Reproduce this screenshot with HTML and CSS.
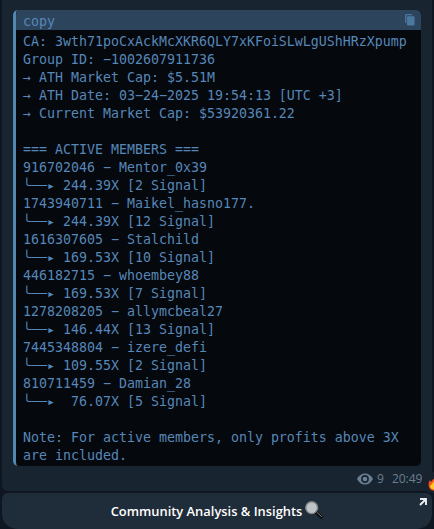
FILE: index.html
```html
<!DOCTYPE html>
<html lang="en">
<head>
    <meta charset="utf-8">
    <title>Community Analysis</title>
    <link rel="stylesheet" href="styles.css">
</head>
<body>
    <div class="message">
        <div class="code-block">
            <div class="code-header">
                <span>copy</span>
                <svg class="copy-icon" width="10" height="12" viewBox="0 0 10 12">
                    <path d="M0.7 9V2Q0.7 0.7 2 0.7H7" fill="none" stroke="#4a789f" stroke-width="1.3"/>
                    <rect x="2" y="2.3" width="7.5" height="9.2" rx="1" fill="#4a789f"/>
                </svg>
            </div>
<pre class="code-text">CA: 3wth71poCxAckMcXKR6QLY7xKFoiSLwLgUShHRzXpump
Group ID: −1002607911736
→ ATH Market Cap: $5.51M
→ ATH Date: 03−24−2025 19:54:13 [UTC +3]
→ Current Market Cap: $53920361.22

=== ACTIVE MEMBERS ===
916702046 − Mentor_0x39
╰──▸ 244.39X [2 Signal]
1743940711 − Maikel_hasno177.
╰──▸ 244.39X [12 Signal]
1616307605 − Stalchild
╰──▸ 169.53X [10 Signal]
446182715 − whoembey88
╰──▸ 169.53X [7 Signal]
1278208205 − allymcbeal27
╰──▸ 146.44X [13 Signal]
7445348804 − izere_defi
╰──▸ 109.55X [2 Signal]
810711459 − Damian_28
╰──▸  76.07X [5 Signal]

Note: For active members, only profits above 3X
are included.</pre>
        </div>
        <div class="message-info">
            <svg class="eye" width="16" height="12" viewBox="0 0 16 12">
                <path d="M0 6Q3 0.5 8 0.5T16 6Q13 11.5 8 11.5T0 6Z" fill="#6b7f92"/>
                <circle cx="8" cy="6" r="3.1" fill="#6b7f92" stroke="#182430" stroke-width="1.6"/>
            </svg>
            <span class="views">9</span>
            <span>20:49</span>
        </div>
        <!-- reaction hanging over the right edge -->
        <div class="reaction">
            <svg width="16" height="16" viewBox="0 0 16 16">
                <path d="M6 0C8 4 4 4 3 7L2 5C0 8 0 11 2 14Q4 16 8 16T14 12Q15 7 11 4L10 6Q10 2 6 0Z" fill="#f4511e"/>
                <path d="M6 4C7 8 2 9 2 12Q4 15 8 15T12 11L10 9L9 10Q9 7 6 4Z" fill="#ffca28"/>
            </svg>
        </div>
    </div>
    <div class="link-button">
        <span>Community Analysis &amp; Insights</span>
        <svg class="search" width="18" height="18" viewBox="0 0 18 18">
            <path d="M11 11L16.2 16.2" stroke="#0c0d0e" stroke-width="3.2" stroke-linecap="round"/>
            <path d="M12 11.3L16.8 15.8" stroke="#777a7d" stroke-width="1"/>
            <circle cx="6.7" cy="6.7" r="5.9" fill="#bdc3c9" stroke="#858585" stroke-width="1.4"/>
        </svg>
        <svg class="external" width="8" height="8" viewBox="0 0 8 8">
            <path d="M1 1H7V7M7 1L1 7" fill="none" stroke="#e9edf0" stroke-width="1.9"/>
        </svg>
    </div>
</body>
</html>
```
FILE: styles.css
```css
body {
    margin: 0;
    height: 529px;
    overflow: hidden;
    background-color: #0e1721;
    font-family: "Open Sans", sans-serif;
}
.message {
    position: relative;
    box-sizing: border-box;
    height: 491px;
    margin: 0 2px 2px;
    padding: 10px 11px 0;
    background-color: #182430;
    border-radius: 0 0 6px 6px;
}
.code-block {
    box-sizing: border-box;
    height: 456px;
    border-left: 3px solid #5288b0;
    border-radius: 5px;
    background-color: #05080d;
    overflow: hidden;
    color: #5687b8;
    font-family: "DejaVu Sans Mono", monospace;
    font-size: 13.29px;
    line-height: 18px;
}
.code-header {
    display: flex;
    justify-content: space-between;
    height: 20px;
    padding: 0 6px 0 7px;
    background-color: #2d445d;
    line-height: 24px;
}
.copy-icon {
    margin-top: 4px;
}
.code-text {
    margin: 0;
    padding: 3px 0 0 7px;
    font: inherit;
}
.message-info {
    display: flex;
    align-items: center;
    height: 25px;
    padding-left: 344px;
    color: #6b7f92;
    font-size: 12px;
    line-height: 26px;
}
.eye {
    flex-shrink: 0;
}
.views {
    margin: 0 8px 0 4px;
}
.reaction {
    position: absolute;
    left: 420px;
    top: 472px;
    width: 30px;
    height: 21px;
    padding: 3px 0 0 6px;
    box-sizing: border-box;
    border-radius: 10px;
    background-color: #18222d;
}
.reaction svg {
    display: block;
}
.link-button {
    position: relative;
    display: flex;
    justify-content: center;
    align-items: center;
    gap: 3px;
    height: 36px;
    margin: 0 2px;
    border-radius: 6px 6px 15px 15px;
    background-color: #1f2c39;
    color: #fff;
    font-size: 12.9px;
    font-weight: 600;
}
.search {
    margin-top: -3px;
}
.external {
    position: absolute;
    top: 5px;
    right: 5px;
}
```
